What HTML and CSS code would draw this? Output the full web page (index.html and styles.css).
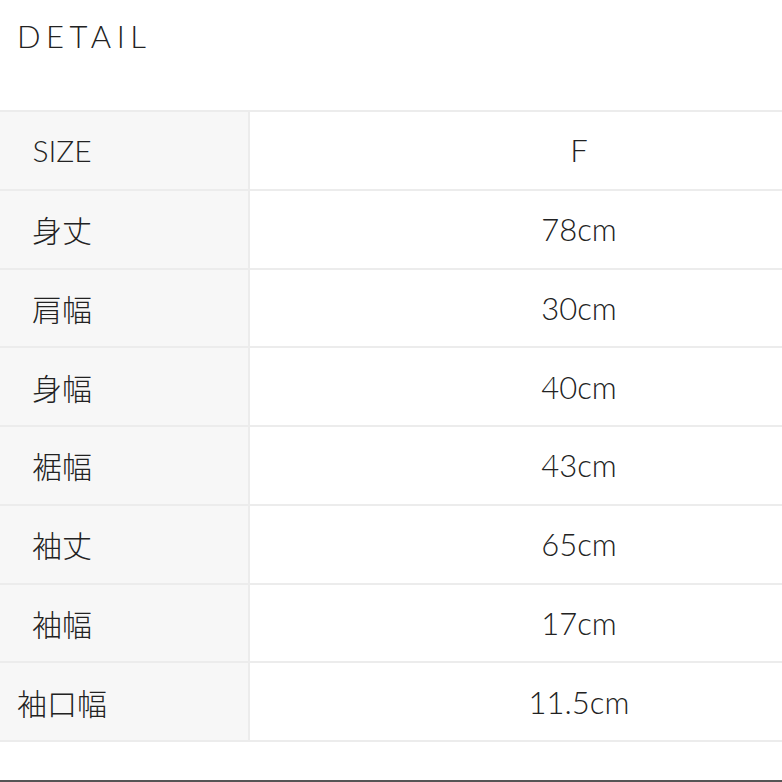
FILE: index.html
```html
<!DOCTYPE html>
<html lang="ja">
<head>
<meta charset="utf-8">
<link rel="stylesheet" href="styles.css">
</head>
<body>
<div class="page">
  <h2 class="title">DETAIL</h2>
  <div class="table">
    <div class="row"><div class="label">SIZE</div><div class="value">F</div></div>
    <div class="row"><div class="label">身丈</div><div class="value">78cm</div></div>
    <div class="row"><div class="label">肩幅</div><div class="value">30cm</div></div>
    <div class="row"><div class="label">身幅</div><div class="value">40cm</div></div>
    <div class="row"><div class="label">裾幅</div><div class="value">43cm</div></div>
    <div class="row"><div class="label">袖丈</div><div class="value">65cm</div></div>
    <div class="row"><div class="label">袖幅</div><div class="value">17cm</div></div>
    <div class="row"><div class="label">袖口幅</div><div class="value">11.5cm</div></div>
  </div>
  <div class="bottom-rule"></div>
</div>
</body>
</html>
```
FILE: styles.css
```css
html, body {
  margin: 0;
  padding: 0;
  background: #ffffff;
}
body {
  font-family: "Lato", "Noto Sans CJK JP", sans-serif;
  font-weight: 300;
  color: #222222;
}
.page {
  width: 782px;
  height: 782px;
  overflow: hidden;
  position: relative;
}
.title {
  margin: 0;
  padding: 16px 0 0 17px;
  height: 110px;
  box-sizing: border-box;
  font-size: 31px;
  font-weight: 300;
  letter-spacing: 5.5px;
  line-height: 40px;
  color: #222;
}
.table {
  border-top: 2px solid #ececec;
}
.row {
  display: grid;
  grid-template-columns: 250px 1fr;
  height: 78.75px;
  box-sizing: border-box;
  border-bottom: 2px solid #ececec;
}
.label {
  background: #f7f7f7;
  border-right: 2px solid #ececec;
  padding-right: 124px;
  display: flex;
  align-items: center;
  justify-content: center;
  font-size: 30px;
  font-weight: 300;
  white-space: nowrap;
}
.value {
  padding-left: 126px;
  display: flex;
  align-items: center;
  justify-content: center;
  font-size: 31px;
}
.bottom-rule {
  position: absolute;
  left: 0;
  right: 0;
  bottom: 0;
  height: 2px;
  background: #555;
}
```
